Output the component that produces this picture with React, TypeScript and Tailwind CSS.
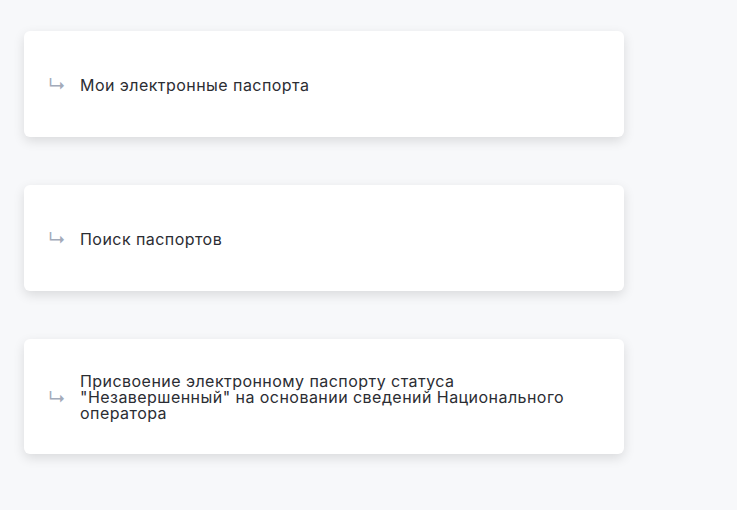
const items = [
  "Мои электронные паспорта",
  "Поиск паспортов",
  'Присвоение электронному паспорту статуса "Незавершенный" на основании сведений Национального оператора',
]

export default function App() {
  return (
    <div className="min-h-[510px] bg-[#f7f8fa] pt-[31px] pl-6" style={{ fontFamily: "Inter, 'Noto Sans', sans-serif" }}>
      <div className="flex flex-col gap-12 w-[600px]">
        {items.map((t) => (
          <div
            key={t}
            className="flex items-center min-h-[106px] py-[33px] pl-6 pr-14 bg-white rounded-md shadow-[0_4px_12px_rgba(0,0,0,0.12)]"
          >
            <span className="w-[32px] shrink-0 text-[18px] text-[#a3abba] leading-none pt-1">↳</span>
            <p className="text-[16px] leading-4 tracking-[0.45px] text-[#2b2d33] pt-px">{t}</p>
          </div>
        ))}
      </div>
    </div>
  )
}
